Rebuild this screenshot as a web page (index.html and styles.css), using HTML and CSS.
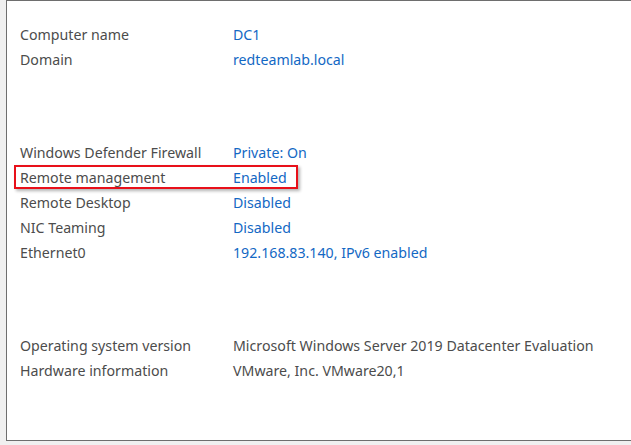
FILE: index.html
```html
<!DOCTYPE html>
<html lang="en">
<head>
    <meta charset="UTF-8">
    <title>Properties</title>
    <link rel="stylesheet" href="styles.css">
</head>
<body>
    <div class="panel">
        <div class="group">
            <div class="row"><span class="label">Computer name</span><span class="value link">DC1</span></div>
            <div class="row"><span class="label">Domain</span><span class="value link">redteamlab.local</span></div>
        </div>

        <div class="group">
            <div class="row"><span class="label">Windows Defender Firewall</span><span class="value link">Private: On</span></div>
            <div class="row marked"><span class="label">Remote management</span><span class="value link">Enabled</span><span class="mark"></span></div>
            <div class="row"><span class="label">Remote Desktop</span><span class="value link">Disabled</span></div>
            <div class="row"><span class="label">NIC Teaming</span><span class="value link">Disabled</span></div>
            <div class="row"><span class="label">Ethernet0</span><span class="value link">192.168.83.140, IPv6 enabled</span></div>
        </div>

        <div class="group">
            <div class="row"><span class="label">Operating system version</span><span class="value">Microsoft Windows Server 2019 Datacenter Evaluation</span></div>
            <div class="row"><span class="label">Hardware information</span><span class="value">VMware, Inc. VMware20,1</span></div>
        </div>
    </div>
</body>
</html>
```

FILE: styles.css
```css
html, body {
    margin: 0;
    height: 100%;
    overflow: hidden;
}
body {
    background: #f0f0f0;
    font-family: "Noto Sans", "Open Sans", sans-serif;
    font-size: 14.2px;
    padding-left: 6px;
}
.panel {
    background: #fff;
    border: 1px solid #6e6e6e;
    border-right: none;
    height: 441px;
    box-sizing: border-box;
    padding: 21px 0 0 13px;
    margin-right: -10px;
}
.group {
    margin-bottom: 68px;
}
.row {
    position: relative;
    display: flex;
    height: 25px;
    line-height: 25px;
}
.label {
    width: 213px;
    color: #4c4c4c;
}
.value {
    color: #4c4c4c;
}
.link {
    color: #1368c4;
}
.mark {
    position: absolute;
    left: -6px;
    top: 0;
    width: 284px;
    height: 24px;
    box-sizing: border-box;
    border: 2px solid #e8101a;
    box-shadow: 2px 2px 3px rgba(0, 0, 0, 0.3);
}
```
